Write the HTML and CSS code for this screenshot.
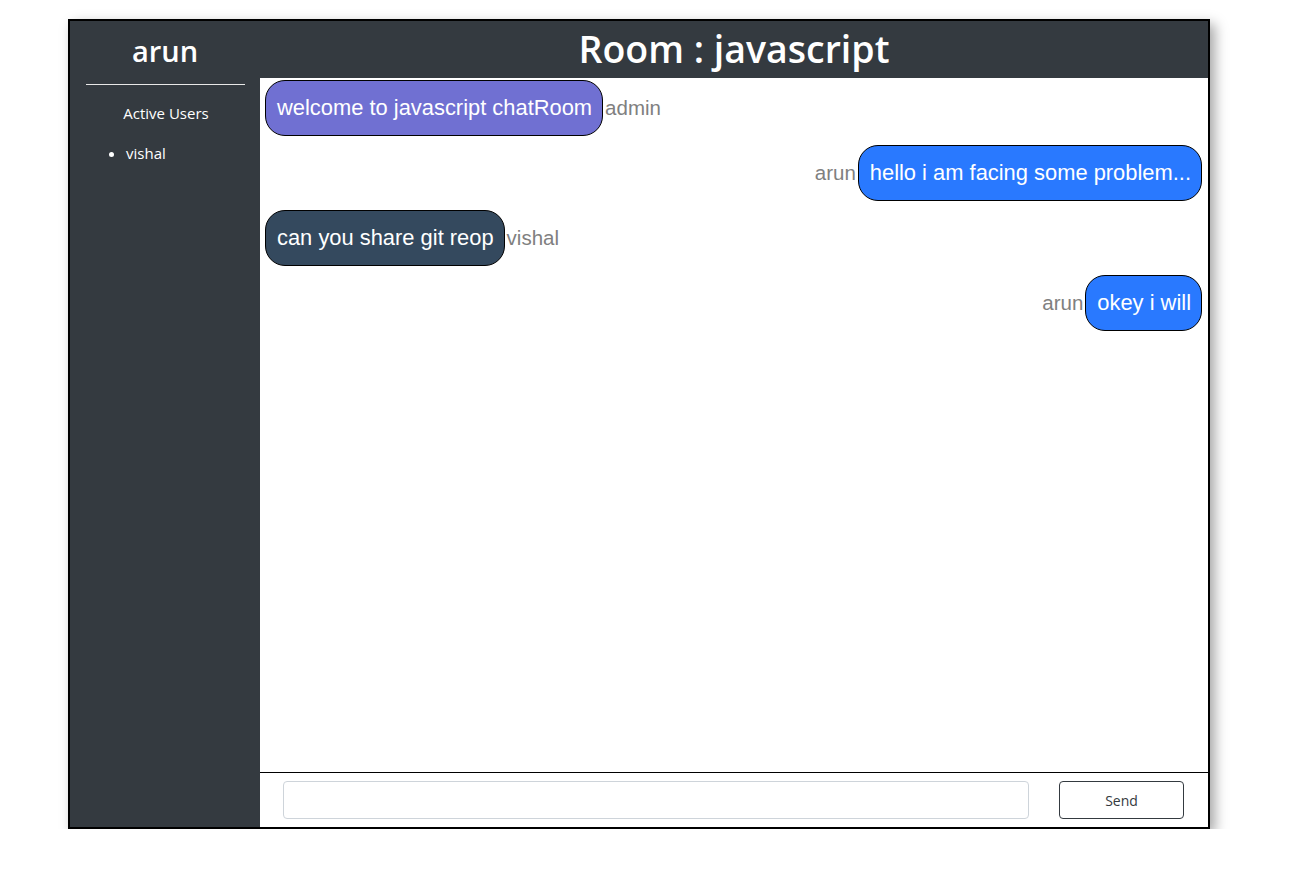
FILE: index.html
```html
<!DOCTYPE html>
<html lang="en">
<head>
<meta charset="utf-8">
<title>Chat</title>
<link rel="stylesheet" href="styles.css">
</head>
<body>
<div class="chat">
  <aside class="sidebar">
    <h2 class="username">arun</h2>
    <hr class="divider">
    <p class="users-title">Active Users</p>
    <ul class="users">
      <li>vishal</li>
    </ul>
  </aside>
  <main class="main">
    <header class="room-header">
      <h1 class="room-title">Room : javascript</h1>
    </header>
    <section class="messages">
      <div class="msg left">
        <div class="bubble admin">welcome to javascript chatRoom</div>
        <span class="sender">admin</span>
      </div>
      <div class="msg right">
        <span class="sender">arun</span>
        <div class="bubble mine">hello i am facing some problem...</div>
      </div>
      <div class="msg left">
        <div class="bubble other">can you share git reop</div>
        <span class="sender">vishal</span>
      </div>
      <div class="msg right">
        <span class="sender">arun</span>
        <div class="bubble mine">okey i will</div>
      </div>
    </section>
    <form class="composer">
      <input class="text-input" type="text" autofocus>
      <button class="send-btn" type="button">Send</button>
    </form>
  </main>
</div>
</body>
</html>
```

FILE: styles.css
```css
* { box-sizing: border-box; }

html, body {
  margin: 0;
  padding: 0;
  background: #fff;
}

body {
  font-family: "Open Sans", "Noto Sans", sans-serif;
}

.chat {
  width: 1142px;
  height: 810px;
  margin: 19px 0 0 68px;
  border: 2px solid #000;
  display: flex;
  box-shadow: 5px 5px 12px rgba(0, 0, 0, 0.35);
}

.sidebar {
  width: 190px;
  flex: none;
  background: #343a40;
  color: #fff;
  display: flex;
  flex-direction: column;
}

.username {
  margin: 0;
  height: 57px;
  display: flex;
  align-items: center;
  justify-content: center;
  font-size: 29px;
  font-weight: 600;
  padding-top: 1px;
}

.divider {
  margin: 6px 15px 0 16px;
  border: 0;
  border-top: 1px solid #e8e8e8;
}

.users-title {
  margin: 17px 0 0;
  text-align: center;
  font-size: 15px;
  line-height: 22px;
  padding-left: 2px;
}

.users {
  margin: 18px 0 0;
  padding-left: 56px;
  font-size: 15px;
  line-height: 22px;
}

.main {
  flex: 1;
  display: flex;
  flex-direction: column;
  min-width: 0;
}

.room-header {
  height: 57px;
  background: #343a40;
  color: #fff;
  display: flex;
  align-items: center;
  justify-content: center;
}

.room-title {
  margin: 0;
  font-size: 37.5px;
  font-weight: 600;
  line-height: 1;
  padding-bottom: 2px;
}

.messages {
  flex: 1;
  padding: 2px 6px 0 5px;
  display: flex;
  flex-direction: column;
  gap: 9px;
  border-bottom: 1px solid #000;
  font-family: "Liberation Sans", Arial, sans-serif;
}

.msg {
  display: flex;
  align-items: center;
}

.msg.right {
  justify-content: flex-end;
}

.bubble {
  border: 1px solid #000;
  border-radius: 20px;
  padding: 14px 10px 14px 11px;
  font-size: 21.9px;
  line-height: 26px;
  color: #fff;
}

.bubble.admin { background: #7070d2; }
.bubble.mine { background: #2979ff; }
.bubble.other { background: #34495e; }

.sender {
  color: #808080;
  font-size: 20.5px;
  line-height: 24px;
  padding: 0 2px;
}

.composer {
  margin: 0;
  height: 54px;
  padding: 8px 24px 8px 23px;
  display: flex;
  gap: 30px;
}

.text-input {
  flex: 1;
  height: 38px;
  border: 1px solid #ced4da;
  border-radius: 4px;
  padding: 6px 12px;
  font-size: 16px;
  font-family: "Open Sans", "Noto Sans", sans-serif;
  outline: none;
}

.send-btn {
  width: 125px;
  height: 38px;
  border: 1px solid #343a40;
  border-radius: 4px;
  background: #fff;
  color: #343a40;
  font-family: "Open Sans", "Noto Sans", sans-serif;
  font-size: 14px;
}
```
